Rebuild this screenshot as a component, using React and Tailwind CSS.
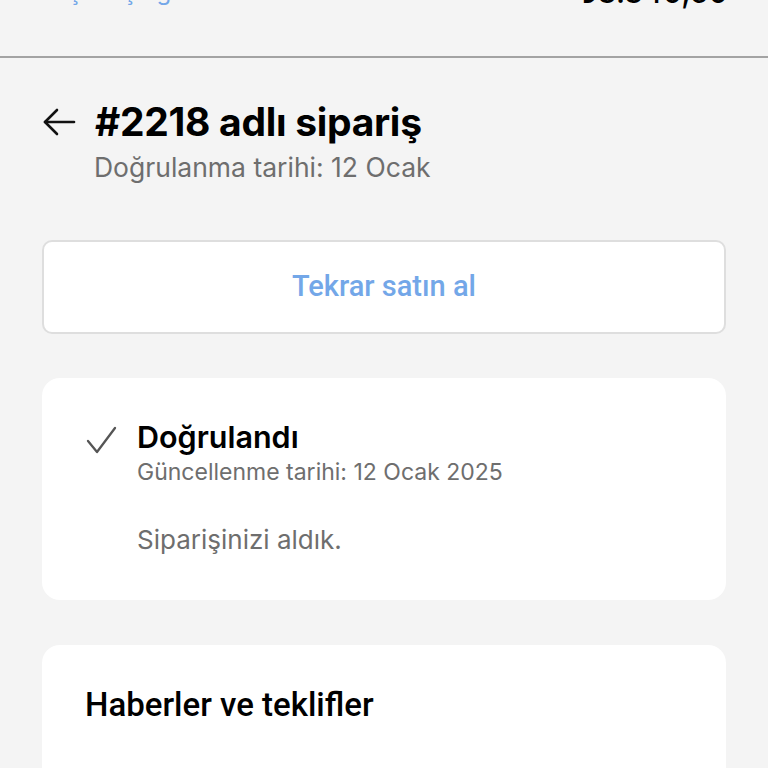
import React from "react";

function BackArrow() {
    return (
        <svg width="34" height="30" viewBox="0 0 34 30" fill="none" stroke="#111" strokeWidth="2.6" strokeLinecap="round" strokeLinejoin="round">
            <path d="M32 15H3" />
            <path d="M15 3L3 15l12 12" />
        </svg>
    );
}

function Check() {
    return (
        <svg width="31" height="28" viewBox="0 0 31 28" fill="none" stroke="#555" strokeWidth="2.3" strokeLinecap="round" strokeLinejoin="round">
            <path d="M2 15l9 11L29 2" />
        </svg>
    );
}

export default function App() {
    return (
        <div className="min-h-screen bg-[#f4f4f4] font-['Inter','Noto_Sans',sans-serif] text-black">
            {/* top bar, scrolled mostly out of view */}
            <div className="h-[56px] overflow-hidden flex justify-between px-[40px]">
                <span className="-mt-[22px] text-[24px] leading-[28px] text-[#73a7e8]">Alışverişe git</span>
                <span className="-mt-[22px] text-[30px] leading-[28px] font-medium">₺3.340,50</span>
            </div>
            <div className="h-[2px] bg-[#a3a3a3]" />

            <div className="px-[42px] pt-[42px]">
                {/* Title */}
                <div className="flex items-center gap-[19px]">
                    <BackArrow />
                    <h1 className="text-[39px] leading-[44px] font-bold tracking-[-0.3px]">#2218 adlı sipariş</h1>
                </div>
                <p className="pl-[52px] mt-[7px] text-[26.5px] leading-[32px] text-[#6e6e6e]">Doğrulanma tarihi: 12 Ocak</p>

                {/* Buy again */}
                <button className="mt-[57px] w-full h-[94px] bg-white border-2 border-[#dedede] rounded-[10px] text-[29px] font-medium text-[#73a7e8] font-['Roboto',sans-serif]">
                    Tekrar satın al
                </button>

                {/* Status card */}
                <div className="mt-[44px] bg-white rounded-[18px] pl-[44px] pr-6 pt-[40px] pb-[44px]">
                    <div className="flex gap-[20px]">
                        <div className="pt-[8px]"><Check /></div>
                        <div>
                            <h2 className="text-[30.5px] leading-[38px] font-semibold">Doğrulandı</h2>
                            <p className="text-[23px] leading-[32px] text-[#6e6e6e]">Güncellenme tarihi: 12 Ocak 2025</p>
                            <p className="mt-[36px] text-[26px] leading-[32px] text-[#6e6e6e]">Siparişinizi aldık.</p>
                        </div>
                    </div>
                </div>

                {/* News card */}
                <div className="mt-[45px] bg-white rounded-[18px] px-[43px] pt-[40px] pb-[60px]">
                    <h2 className="text-[33px] leading-[40px] font-medium font-['Roboto',sans-serif]">Haberler ve teklifler</h2>
                </div>
            </div>
        </div>
    );
}
